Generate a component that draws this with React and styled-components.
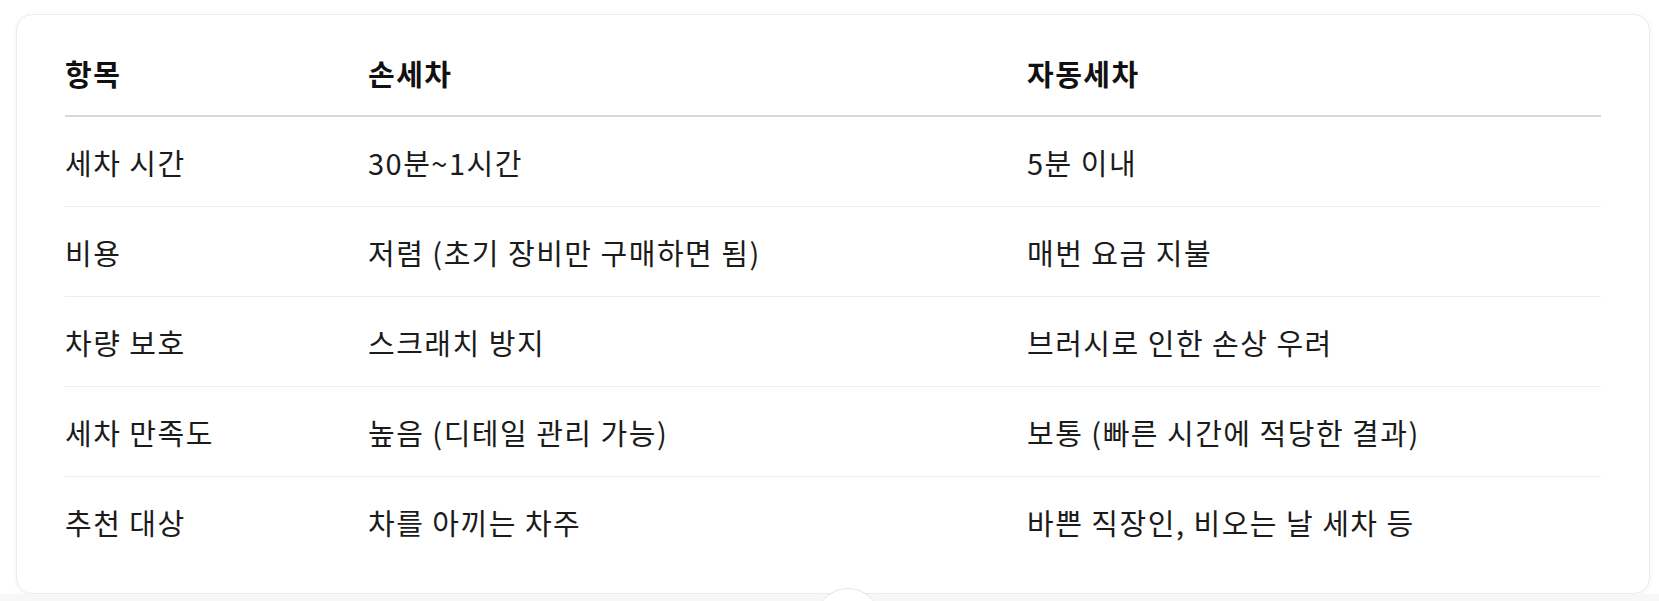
import React from "react";
import styled, { createGlobalStyle } from "styled-components";

const Global = createGlobalStyle`
  html, body { margin: 0; padding: 0; background: #ffffff; }
  body { font-family: "Noto Sans CJK KR", "Noto Sans", sans-serif; color: #1b1b1b; }
  #root { position: relative; min-height: 601px; overflow: hidden; }
`;

const Page = styled.div`
  display: flex;
  flex-direction: column;
  min-height: 601px;
`;

const CardArea = styled.div`
  padding: 14px 9px 0 16px;
`;

const Card = styled.section`
  background: #ffffff;
  border: 1px solid #ececec;
  border-radius: 16px;
  box-shadow: 0 1px 5px rgba(0, 0, 0, 0.05);
  padding: 16px 48px 26px;
`;

const Table = styled.table`
  width: 100%;
  border-collapse: collapse;
  table-layout: fixed;
  font-size: 29px;
  letter-spacing: 1.5px;
`;

const HeadCell = styled.th`
  text-align: left;
  font-weight: 700;
  color: #111111;
  height: 84px;
  padding: 0;
  vertical-align: middle;
  border-bottom: 2px solid #d8d8d8;
`;

const Row = styled.tr`
  border-bottom: 1px solid ${(p) => (p.$last ? "transparent" : "#eeeeee")};
`;

const Cell = styled.td`
  padding: 0;
  height: 89px;
  vertical-align: middle;
  font-weight: 400;
  color: #1b1b1b;
  white-space: nowrap;
`;

const BottomBand = styled.div`
  flex: 1;
  background: #f7f7f7;
`;

const ScrollButton = styled.button`
  position: absolute;
  left: 815px;
  top: 588px;
  width: 66px;
  height: 66px;
  border-radius: 50%;
  background: #ffffff;
  border: 1px solid #e6e6e6;
  padding: 0;
`;

const rows = [
  ["세차 시간", "30분~1시간", "5분 이내"],
  ["비용", "저렴 (초기 장비만 구매하면 됨)", "매번 요금 지불"],
  ["차량 보호", "스크래치 방지", "브러시로 인한 손상 우려"],
  ["세차 만족도", "높음 (디테일 관리 가능)", "보통 (빠른 시간에 적당한 결과)"],
  ["추천 대상", "차를 아끼는 차주", "바쁜 직장인, 비오는 날 세차 등"],
];

export default function App() {
  return (
    <>
      <Global />
      <Page>
        <CardArea>
          <Card>
            <Table>
              <colgroup>
                <col style={{ width: 303 }} />
                <col style={{ width: 659 }} />
                <col />
              </colgroup>
              <thead>
                <tr>
                  <HeadCell>항목</HeadCell>
                  <HeadCell>손세차</HeadCell>
                  <HeadCell>자동세차</HeadCell>
                </tr>
              </thead>
              <tbody>
                {rows.map((r, i) => (
                  <Row key={r[0]} $last={i === rows.length - 1}>
                    {r.map((c) => (
                      <Cell key={c}>{c}</Cell>
                    ))}
                  </Row>
                ))}
              </tbody>
            </Table>
          </Card>
        </CardArea>
        <BottomBand />
      </Page>
      <ScrollButton aria-label="아래로 스크롤" />
    </>
  );
}
